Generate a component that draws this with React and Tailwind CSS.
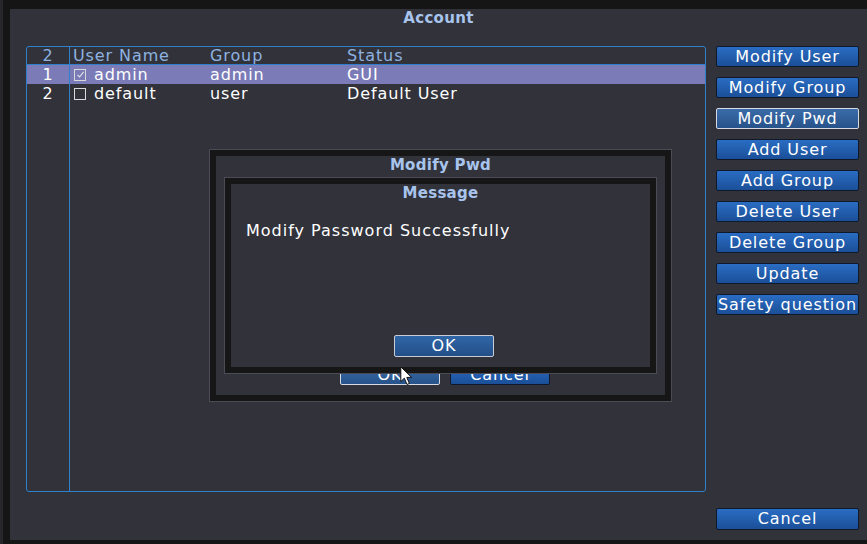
import React from "react";

const users = [
  { id: 1, name: "admin", group: "admin", status: "GUI", checked: true, active: true },
  { id: 2, name: "default", group: "user", status: "Default User", checked: false, active: false },
];

const actions = [
  "Modify User",
  "Modify Group",
  "Modify Pwd",
  "Add User",
  "Add Group",
  "Delete User",
  "Delete Group",
  "Update",
  "Safety question",
];

const font = { fontFamily: '"DejaVu Sans", Verdana, sans-serif' };

function DvrButton({ label, focused, className = "" }) {
  const skin = focused
    ? "border-[#d6dae2] bg-gradient-to-b from-[#3b6ca8] to-[#27528a]"
    : "border-[#0e1a2c] bg-gradient-to-b from-[#2a6dc3] to-[#1b4f98]";
  return (
    <div
      className={`flex items-center justify-center border rounded-[2px] text-white text-[16px] leading-none tracking-[0.9px] ${skin} ${className}`}
    >
      {label}
    </div>
  );
}

function CheckBox({ checked }) {
  return (
    <span className="w-[12px] h-[12px] border border-[#d8d8d8] flex items-center justify-center shrink-0">
      {checked && (
        <svg width="9" height="9" viewBox="0 0 9 9">
          <path d="M1.5 4.8 L3.6 7 L7.6 1.8" stroke="#e6e6e6" strokeWidth="1.1" fill="none" />
        </svg>
      )}
    </span>
  );
}

function Cursor() {
  return (
    <svg width="14" height="20" viewBox="0 0 14 20" className="absolute left-[397px] top-[366px]">
      <path
        d="M0.8 0.8 L0.8 15.5 L4.3 12.2 L7 18.5 L9.4 17.4 L6.8 11.4 L11.6 11.4 Z"
        fill="#ffffff"
        stroke="#111111"
        strokeWidth="1"
        strokeLinejoin="round"
      />
    </svg>
  );
}

export default function App() {
  return (
    <div
      className="relative w-[867px] h-[544px] bg-[#151515] border-l-[3px] border-[#26262b] pl-[7px] pt-[9px] pb-[4px] overflow-hidden"
      style={font}
    >
      <div className="h-full bg-[#31323a] flex flex-col">
        {/* Window title */}
        <div className="h-[18px] flex items-center justify-center text-[15px] font-bold tracking-[0.3px] text-[#a8c4ec]">
          Account
        </div>

        <div className="flex flex-1 mt-[18px] pl-[16px] pr-[8px] pb-[10px]">
          {/* User list */}
          <div className="w-[680px] h-[446px] mt-[1px] border border-[#2f80cc] rounded-[3px] flex flex-col text-[16px] tracking-[0.9px] leading-none">
            <div className="flex h-[18px] border-b border-[#2f80cc] text-[#8eb3e0]">
              <div className="w-[43px] border-r border-[#2f80cc] flex items-center justify-center">2</div>
              <div className="w-[140px] pl-[3px] flex items-center">User Name</div>
              <div className="w-[137px] flex items-center">Group</div>
              <div className="flex-1 flex items-center">Status</div>
            </div>
            {users.map((u) => (
              <div
                key={u.id}
                className={`flex h-[19px] text-white ${u.active ? "bg-[#7a7bb7]" : ""}`}
              >
                <div className="w-[43px] border-r border-[#2f80cc] flex items-center justify-center">{u.id}</div>
                <div className="w-[140px] pl-[4px] flex items-center gap-[8px]">
                  <CheckBox checked={u.checked} />
                  {u.name}
                </div>
                <div className="w-[137px] flex items-center">{u.group}</div>
                <div className="flex-1 flex items-center">{u.status}</div>
              </div>
            ))}
            <div className="flex flex-1">
              <div className="w-[43px] border-r border-[#2f80cc]" />
            </div>
          </div>

          {/* Action buttons */}
          <div className="ml-[10px] mt-[1px] w-[143px] flex flex-col gap-[10px]">
            {actions.map((a) => (
              <DvrButton key={a} label={a} focused={a === "Modify Pwd"} className="h-[21px]" />
            ))}
            <DvrButton label="Cancel" className="h-[22px] mt-auto" />
          </div>
        </div>
      </div>

      {/* Modify Pwd dialog */}
      <div className="absolute left-[206px] top-[149px] w-[463px] h-[253px] border border-[#4a4b55]">
        <div className="h-full border-[6px] border-[#161616] bg-[#31323a] flex flex-col">
          <div className="h-[16px] mt-[1px] flex items-center justify-center text-[15px] font-bold tracking-[0.3px] text-[#a8c4ec]">
            Modify Pwd
          </div>
          <div className="flex-1" />
          <div className="flex gap-[10px] ml-[124px] mb-[10px] text-[16px]">
            <DvrButton label="OK" focused className="w-[100px] h-[21px]" />
            <DvrButton label="Cancel" className="w-[100px] h-[21px]" />
          </div>
        </div>
      </div>

      {/* Message box */}
      <div className="absolute left-[221px] top-[177px] w-[433px] h-[197px] border border-[#4a4b55]">
        <div className="h-full border-[6px] border-[#161616] bg-[#31323a] flex flex-col">
          <div className="h-[16px] mt-[1px] flex items-center justify-center text-[15px] font-bold tracking-[0.3px] text-[#a8c4ec]">
            Message
          </div>
          <div className="mt-[22px] pl-[15px] text-white text-[16px] tracking-[1px] leading-none">
            Modify Password Successfully
          </div>
          <div className="flex-1" />
          <DvrButton
            label="OK"
            className="w-[100px] h-[22px] ml-[163px] mb-[10px] !border-[#c9ced6] !from-[#2f66a6] !to-[#244f88]"
          />
        </div>
      </div>

      <Cursor />
    </div>
  );
}
